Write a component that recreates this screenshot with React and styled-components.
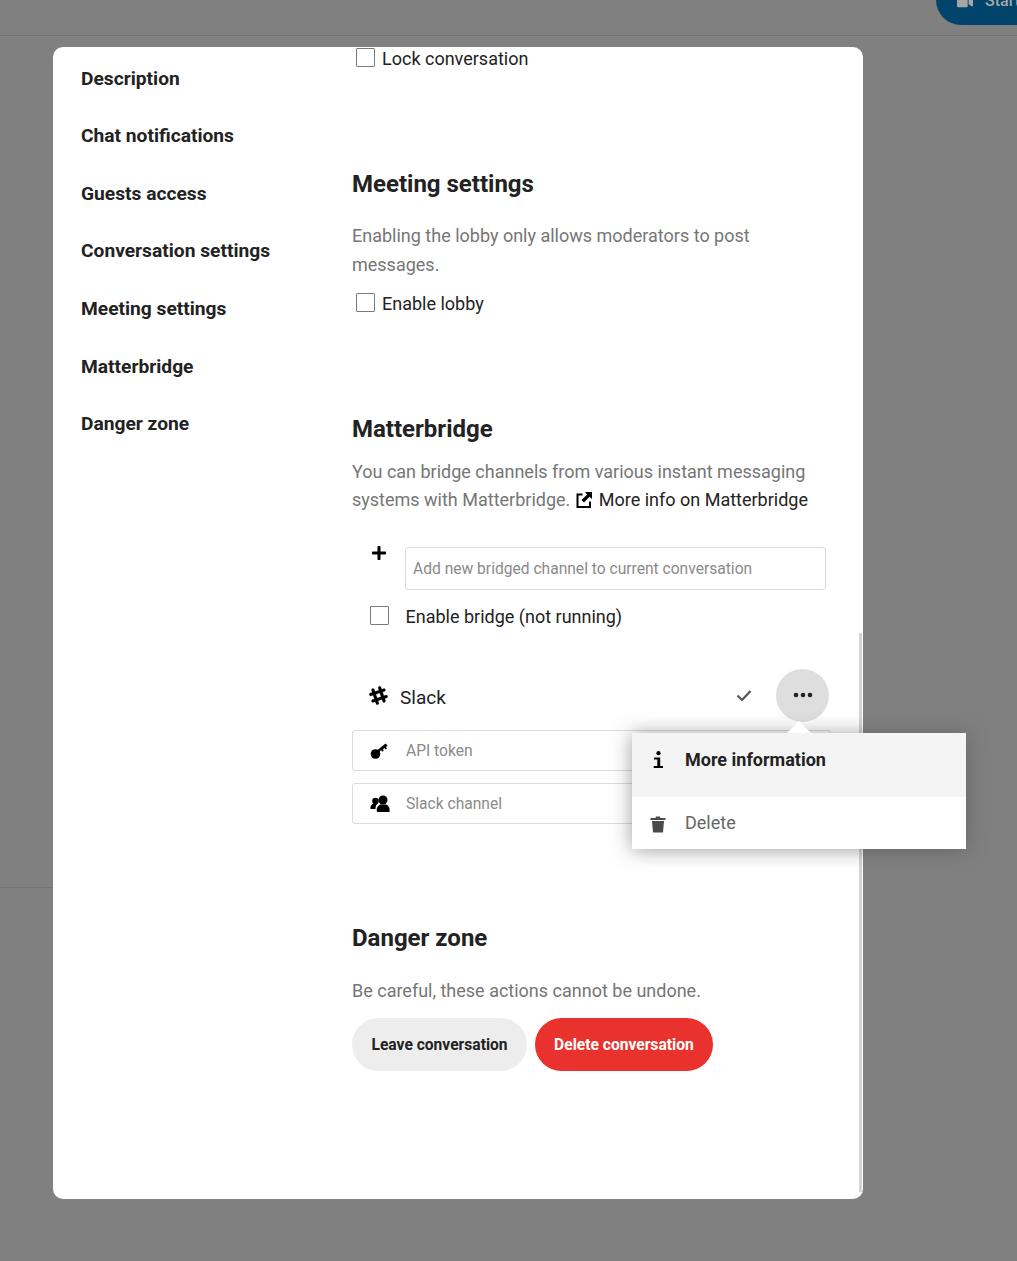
import React from 'react';
import styled, { createGlobalStyle } from 'styled-components';
import { FaPlus, FaSlackHash, FaVideo } from 'react-icons/fa';

const GlobalStyle = createGlobalStyle`
    html, body {
        margin: 0;
        padding: 0;
        background: #808080;
        font-family: Roboto, "Noto Sans", sans-serif;
        color: #222;
    }
    * {
        box-sizing: border-box;
    }
`;

const Backdrop = styled.div`
    position: relative;
    width: 1017px;
    height: 1261px;
    overflow: hidden;
    background: #808080;
`;

const TopBar = styled.div`
    display: flex;
    justify-content: flex-end;
    height: 36px;
    border-bottom: 1px solid #737373;
`;

const StartButton = styled.div`
    display: flex;
    flex: none;
    align-items: flex-end;
    gap: 12px;
    width: 81px;
    height: 25px;
    padding: 0 0 15px 21px;
    background: #00446b;
    color: #a6a6a6;
    border-radius: 0 0 0 25px;
    font-size: 16px;
    font-weight: 500;
    white-space: nowrap;
    overflow: hidden;

    svg {
        flex: none;
    }
`;

const BehindLine = styled.div`
    position: absolute;
    left: 0;
    top: 887px;
    width: 53px;
    height: 1px;
    background: #737373;
`;

const Modal = styled.div`
    position: relative;
    display: flex;
    width: 810px;
    height: 1152px;
    margin: 11px 0 0 53px;
    background: #fff;
    border-radius: 10px;
`;

const Nav = styled.nav`
    display: flex;
    flex-direction: column;
    width: 299px;
    padding: 17.7px 0 0 28px;
`;

const NavItem = styled.div`
    height: 57.6px;
    line-height: 28px;
    font-size: 19.2px;
    font-weight: 700;
    color: #222;
`;

const Content = styled.div`
    flex: 1;
    min-width: 0;
`;

const CheckRow = styled.label`
    display: flex;
    align-items: center;
    gap: 7px;
    height: 28px;
    margin-top: ${p => p.$top || 0}px;
    padding-left: 4px;
    font-size: 18px;
    color: #222;
`;

const CheckBox = styled.span`
    flex: none;
    width: 19px;
    height: 19px;
    margin-top: ${p => p.$lift || -2}px;
    background: #fff;
    border: 1px solid #7b7b7b;
    border-radius: 1px;
`;

const Heading = styled.h2`
    margin: ${p => p.$top}px 0 ${p => p.$bottom}px;
    font-size: 24px;
    line-height: 32px;
    font-weight: 700;
    color: #222;
`;

const Hint = styled.p`
    margin: 0;
    width: 470px;
    font-size: 18px;
    line-height: 28.5px;
    color: #767676;
`;

const MoreLink = styled.span`
    color: #222;
`;

const LinkIcon = styled.svg`
    display: inline-block;
    width: 16px;
    height: 16px;
    margin: 0 7px 0 1px;
    vertical-align: -2px;
`;

const AddRow = styled.div`
    display: flex;
    margin-top: 32.5px;
    padding-left: 19px;
    width: 474px;
    color: #000;
`;

const PlusSlot = styled.div`
    flex: none;
    width: 34px;
    font-size: 16px;

    svg {
        display: block;
        margin-top: -2px;
    }
`;

const AddInput = styled.div`
    flex: 1;
    height: 43px;
    padding-left: 7px;
    line-height: 43px;
    border: 1px solid #dbdbdb;
    border-radius: 3px;
    font-size: 15.6px;
    color: #8a8a8a;
`;

const BridgeToggle = styled.label`
    display: flex;
    align-items: center;
    gap: 16.5px;
    height: 28px;
    margin-top: 12px;
    padding-left: 18px;
    font-size: 18px;
    color: #222;
`;

const BridgeRow = styled.div`
    display: flex;
    align-items: center;
    width: 477px;
    height: 53px;
    margin-top: 39px;
    padding-left: 16px;
    font-size: 19px;
    color: #222;
`;

const SlackIcon = styled(FaSlackHash)`
    flex: none;
    font-size: 21px;
    color: #000;
    stroke: #000;
    stroke-width: 5px;
`;

const SlackName = styled.span`
    flex: 1;
    margin-left: 11px;
    padding-top: 3px;
`;

const CheckIcon = styled.svg`
    flex: none;
    width: 16px;
    height: 13px;
    margin: 0 24px 1px 0;
`;

const ActionButton = styled.span`
    display: flex;
    align-items: center;
    justify-content: center;
    width: 53px;
    height: 53px;
    border-radius: 50%;
    background: #dedede;
`;

const Dots = styled.svg`
    width: 20px;
    height: 6px;
    margin-top: -1px;
`;

const Field = styled.div`
    display: flex;
    align-items: center;
    width: 479px;
    height: 41px;
    margin-top: ${p => p.$top}px;
    border: 1px solid #dbdbdb;
    border-radius: 3px;
    font-size: 15.6px;
    color: #8a8a8a;
`;

const FieldIcon = styled.svg`
    flex: none;
    width: 20px;
    height: 18px;
    margin: 0 16px 0 17px;
`;

const Actions = styled.div`
    display: flex;
    gap: 8px;
    margin-top: 12.500px;
`;

const Pill = styled.button`
    height: 53px;
    padding: 2px ${p => (p.$danger ? 19 : 19.5)}px 0;
    border: 0;
    border-radius: 27px;
    background: ${p => (p.$danger ? '#e9322d' : '#ededed')};
    color: ${p => (p.$danger ? '#fff' : '#222')};
    font-family: inherit;
    font-size: 15.6px;
    font-weight: 700;
`;

const ScrollThumb = styled.div`
    position: absolute;
    right: 1px;
    top: 586px;
    bottom: 7px;
    width: 3px;
    background: #d4d4d4;
`;

const Menu = styled.div`
    position: absolute;
    left: 579px;
    top: 686px;
    width: 334px;
    background: #fff;
    border-radius: 0 0 3px 3px;
    box-shadow: 0 1px 20px rgba(77, 77, 77, 0.55);

    &::before {
        content: '';
        position: absolute;
        left: 155px;
        top: -12px;
        border: solid transparent;
        border-width: 0 12px 12px;
        border-bottom-color: #fff;
    }
`;

const MenuItem = styled.div`
    display: flex;
    height: ${p => p.$height}px;
    padding-top: ${p => (p.$active ? 12 : 11)}px;
    background: ${p => (p.$active ? '#f4f4f4' : '#fff')};
    color: ${p => (p.$active ? '#222' : '#666')};
    font-size: 18px;
    line-height: 30px;
    font-weight: ${p => (p.$active ? 700 : 400)};
`;

const MenuIcon = styled.svg`
    flex: none;
    width: 16px;
    height: 18px;
    margin: ${p => p.$top}px 19px 0 18px;
`;

export default function App() {
    const navItems = [
        'Description',
        'Chat notifications',
        'Guests access',
        'Conversation settings',
        'Meeting settings',
        'Matterbridge',
        'Danger zone'
    ];

    return (
        <Backdrop>
            <GlobalStyle />
            <TopBar>
                <StartButton><FaVideo /> Start</StartButton>
            </TopBar>
            <BehindLine />
            <Modal>
                <Nav>
                    {navItems.map(item => <NavItem key={item}>{item}</NavItem>)}
                </Nav>
                <Content>
                    <CheckRow $top={-3}><CheckBox $lift={-1} />Lock conversation</CheckRow>

                    <Heading $top={96} $bottom={22}>Meeting settings</Heading>
                    <Hint>Enabling the lobby only allows moderators to post messages.</Hint>
                    <CheckRow $top={10}><CheckBox />Enable lobby</CheckRow>

                    <Heading $top={96} $bottom={12.5}>Matterbridge</Heading>
                    <Hint>
                        You can bridge channels from various instant messaging systems with Matterbridge.{' '}
                        <MoreLink>
                            <LinkIcon viewBox="0 0 16 16" fill="none">
                                <path d="M6.500 2.500H1.500v12.500H14V9.500" stroke="#000" strokeWidth="2" />
                                <path d="M16 0v7l-2.500-2.200L8 10.500 5.500 8l5.700-5.500L9 0z" fill="#000" />
                            </LinkIcon>
                            More info on Matterbridge
                        </MoreLink>
                    </Hint>

                    <AddRow>
                        <PlusSlot><FaPlus /></PlusSlot>
                        <AddInput>Add new bridged channel to current conversation</AddInput>
                    </AddRow>
                    <BridgeToggle><CheckBox />Enable bridge (not running)</BridgeToggle>

                    <BridgeRow>
                        <SlackIcon />
                        <SlackName>Slack</SlackName>
                        <CheckIcon viewBox="0 0 16 13" fill="none">
                            <path d="M1.500 6.500L6 11l8.500-9" stroke="#555" strokeWidth="2.200" />
                        </CheckIcon>
                        <ActionButton>
                            <Dots viewBox="0 0 20 6" fill="#222">
                                <circle cx="3" cy="3" r="2.300" />
                                <circle cx="10" cy="3" r="2.300" />
                                <circle cx="17" cy="3" r="2.300" />
                            </Dots>
                        </ActionButton>
                    </BridgeRow>
                    <Field $top={8}>
                        <FieldIcon viewBox="0 0 20 18" fill="#000">
                            <circle cx="5.500" cy="12" r="4.800" />
                            <path d="M7 8.500L15.500 1.500l2 2-1.500 1.500 1 1.500-1.500 1-1-1.500-1.500 1.300 .7 1.500-1.700 1L11 7.500 9 12z" />
                        </FieldIcon>
                        API token
                    </Field>
                    <Field $top={12}>
                        <FieldIcon viewBox="0 0 20 18" fill="#000">
                            <circle cx="13" cy="5" r="4.500" />
                            <circle cx="5.500" cy="6" r="3.300" />
                            <path d="M7 17c-1-3 0-6 3-7.500h6c3 1 4 4 3.500 7.500z" />
                            <path d="M.5 14c-.5-2.500.5-4.500 3-5.500H7.500c-1.500 1.500-2 3.500-2 5.500z" />
                        </FieldIcon>
                        Slack channel
                    </Field>

                    <Heading $top={98} $bottom={22.5}>Danger zone</Heading>
                    <Hint>Be careful, these actions cannot be undone.</Hint>
                    <Actions>
                        <Pill>Leave conversation</Pill>
                        <Pill $danger>Delete conversation</Pill>
                    </Actions>
                </Content>
                <ScrollThumb />
                <Menu>
                    <MenuItem $active $height={64}>
                        <MenuIcon $top={6} viewBox="0 0 16 18" fill="#000">
                            <circle cx="8.500" cy="2.200" r="2.100" />
                            <path d="M4 6.500h6.200V15H13v2H3.700v-2h3.600V8.500H4z" />
                        </MenuIcon>
                        More information
                    </MenuItem>
                    <MenuItem $height={52}>
                        <MenuIcon $top={7} viewBox="0 0 16 18" fill="#4a4a4a">
                            <path d="M.5 3h5l.5-1.500h4L10.500 3h5v2H.5z" />
                            <path d="M2 6h12l-1 11.500H3z" />
                        </MenuIcon>
                        Delete
                    </MenuItem>
                </Menu>
            </Modal>
        </Backdrop>
    );
}
